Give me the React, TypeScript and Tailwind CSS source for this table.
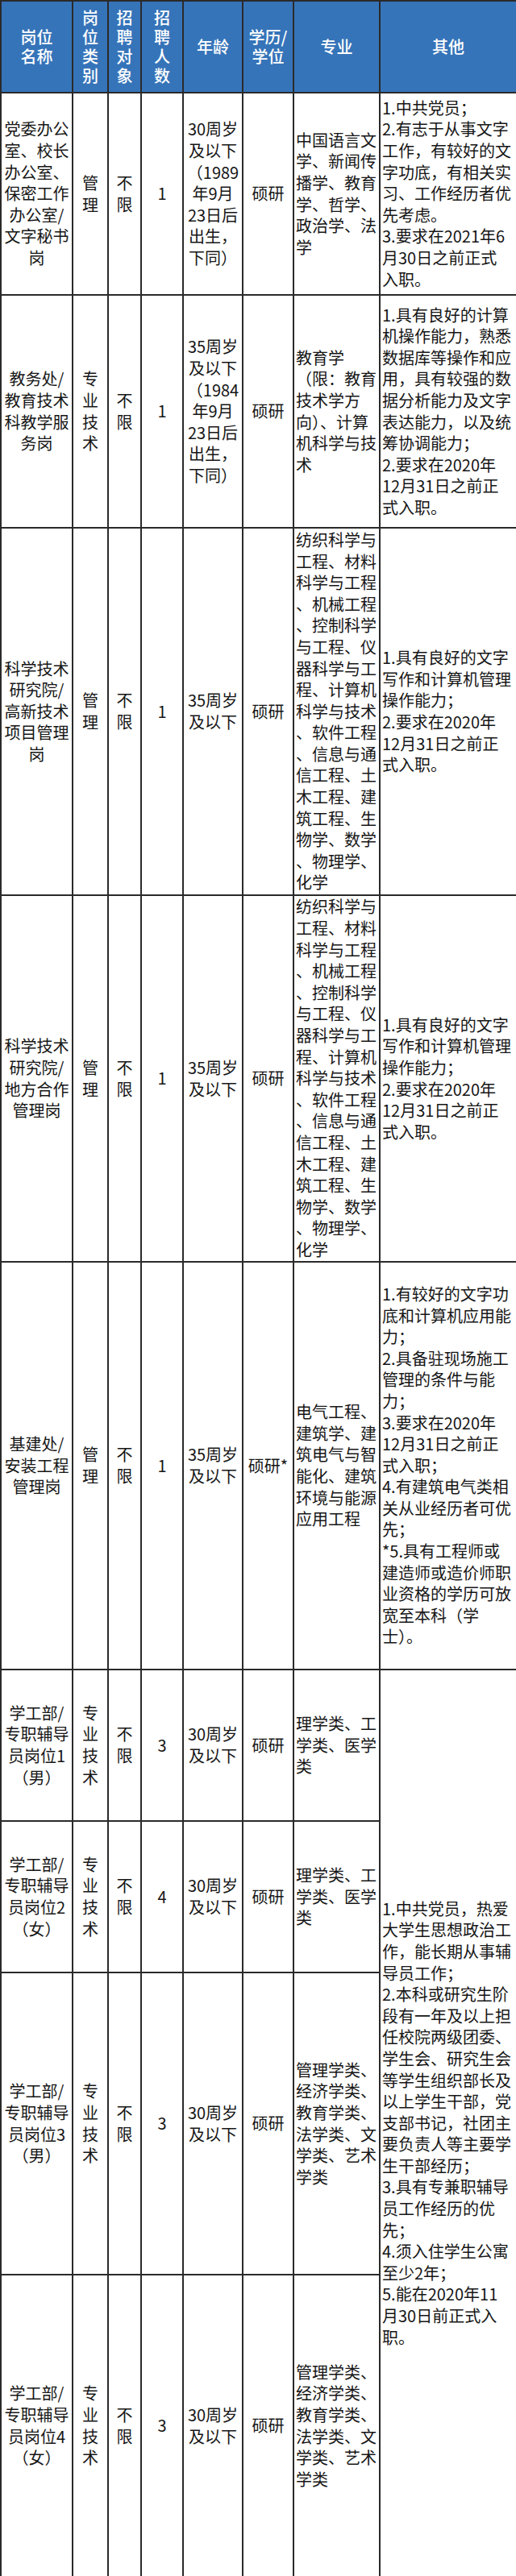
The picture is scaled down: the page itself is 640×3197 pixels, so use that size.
/**
 * Recruitment positions table (岗位表). Static data rendered as a fixed-layout
 * table; each cell's lines are listed explicitly so the wrapping matches the
 * original sheet (which breaks lines without kinsoku rules).
 */

interface PositionRow {
  name: string[];
  type: string[];
  target: string[];
  count: string;
  age: string[];
  degree: string;
  major: string[];
  other?: string[];
  otherSpan?: number;
  height: string;
}

const COL_WIDTHS = ['w-[89px]', 'w-[44px]', 'w-[41px]', 'w-[52px]', 'w-[74px]', 'w-[63px]', 'w-[107px]', 'w-[170px]'];

const SCIENCE_MAJORS = [
  '纺织科学与',
  '工程、材料',
  '科学与工程',
  '、机械工程',
  '、控制科学',
  '与工程、仪',
  '器科学与工',
  '程、计算机',
  '科学与技术',
  '、软件工程',
  '、信息与通',
  '信工程、土',
  '木工程、建',
  '筑工程、生',
  '物学、数学',
  '、物理学、',
  '化学',
];

const SCIENCE_OTHER = [
  '1.具有良好的文字',
  '写作和计算机管理',
  '操作能力；',
  '2.要求在2020年',
  '12月31日之前正',
  '式入职。',
];

const HUMANITIES_MAJORS = ['管理学类、', '经济学类、', '教育学类、', '法学类、文', '学类、艺术', '学类'];

const COUNSELOR_OTHER = [
  '1.中共党员，热爱',
  '大学生思想政治工',
  '作，能长期从事辅',
  '导员工作；',
  '2.本科或研究生阶',
  '段有一年及以上担',
  '任校院两级团委、',
  '学生会、研究生会',
  '等学生组织部长及',
  '以上学生干部，党',
  '支部书记，社团主',
  '要负责人等主要学',
  '生干部经历；',
  '3.具有专兼职辅导',
  '员工作经历的优',
  '先；',
  '4.须入住学生公寓',
  '至少2年；',
  '5.能在2020年11',
  '月30日前正式入',
  '职。',
];

const MGMT = ['管', '理'];
const TECH = ['专', '业', '技', '术'];
const ANY = ['不', '限'];

const ROWS: PositionRow[] = [
  {
    name: ['党委办公', '室、校长', '办公室、', '保密工作', '办公室/', '文字秘书', '岗'],
    type: MGMT,
    target: ANY,
    count: '1',
    age: ['30周岁', '及以下', '（1989', '年9月', '23日后', '出生，', '下同）'],
    degree: '硕研',
    major: ['中国语言文', '学、新闻传', '播学、教育', '学、哲学、', '政治学、法', '学'],
    other: [
      '1.中共党员；',
      '2.有志于从事文字',
      '工作，有较好的文',
      '字功底，有相关实',
      '习、工作经历者优',
      '先考虑。',
      '3.要求在2021年6',
      '月30日之前正式',
      '入职。',
    ],
    height: 'h-[251px]',
  },
  {
    name: ['教务处/', '教育技术', '科教学服', '务岗'],
    type: TECH,
    target: ANY,
    count: '1',
    age: ['35周岁', '及以下', '（1984', '年9月', '23日后', '出生，', '下同）'],
    degree: '硕研',
    major: ['教育学', '（限：教育', '技术学方', '向）、计算', '机科学与技', '术'],
    other: [
      '1.具有良好的计算',
      '机操作能力，熟悉',
      '数据库等操作和应',
      '用，具有较强的数',
      '据分析能力及文字',
      '表达能力，以及统',
      '筹协调能力；',
      '2.要求在2020年',
      '12月31日之前正',
      '式入职。',
    ],
    height: 'h-[289px]',
  },
  {
    name: ['科学技术', '研究院/', '高新技术', '项目管理', '岗'],
    type: MGMT,
    target: ANY,
    count: '1',
    age: ['35周岁', '及以下'],
    degree: '硕研',
    major: SCIENCE_MAJORS,
    other: SCIENCE_OTHER,
    height: 'h-[456px]',
  },
  {
    name: ['科学技术', '研究院/', '地方合作', '管理岗'],
    type: MGMT,
    target: ANY,
    count: '1',
    age: ['35周岁', '及以下'],
    degree: '硕研',
    major: SCIENCE_MAJORS,
    other: SCIENCE_OTHER,
    height: 'h-[455px]',
  },
  {
    name: ['基建处/', '安装工程', '管理岗'],
    type: MGMT,
    target: ANY,
    count: '1',
    age: ['35周岁', '及以下'],
    degree: '硕研*',
    major: ['电气工程、', '建筑学、建', '筑电气与智', '能化、建筑', '环境与能源', '应用工程'],
    other: [
      '1.有较好的文字功',
      '底和计算机应用能',
      '力；',
      '2.具备驻现场施工',
      '管理的条件与能',
      '力；',
      '3.要求在2020年',
      '12月31日之前正',
      '式入职；',
      '4.有建筑电气类相',
      '关从业经历者可优',
      '先；',
      '*5.具有工程师或',
      '建造师或造价师职',
      '业资格的学历可放',
      '宽至本科（学',
      '士）。',
    ],
    height: 'h-[506px]',
  },
  {
    name: ['学工部/', '专职辅导', '员岗位1', '（男）'],
    type: TECH,
    target: ANY,
    count: '3',
    age: ['30周岁', '及以下'],
    degree: '硕研',
    major: ['理学类、工', '学类、医学', '类'],
    other: COUNSELOR_OTHER,
    otherSpan: 4,
    height: 'h-[188px]',
  },
  {
    name: ['学工部/', '专职辅导', '员岗位2', '（女）'],
    type: TECH,
    target: ANY,
    count: '4',
    age: ['30周岁', '及以下'],
    degree: '硕研',
    major: ['理学类、工', '学类、医学', '类'],
    height: 'h-[188px]',
  },
  {
    name: ['学工部/', '专职辅导', '员岗位3', '（男）'],
    type: TECH,
    target: ANY,
    count: '3',
    age: ['30周岁', '及以下'],
    degree: '硕研',
    major: HUMANITIES_MAJORS,
    height: 'h-[375px]',
  },
  {
    name: ['学工部/', '专职辅导', '员岗位4', '（女）'],
    type: TECH,
    target: ANY,
    count: '3',
    age: ['30周岁', '及以下'],
    degree: '硕研',
    major: HUMANITIES_MAJORS,
    height: 'h-[375px]',
  },
];

const HEADERS: string[][] = [
  ['岗位', '名称'],
  ['岗', '位', '类', '别'],
  ['招', '聘', '对', '象'],
  ['招', '聘', '人', '数'],
  ['年龄'],
  ['学历/', '学位'],
  ['专业'],
  ['其他'],
];

const CELL = 'border-2 border-[#2a2a2a] p-0 align-middle';

function Lines({ lines }: { lines: string[] }) {
  return (
    <>
      {lines.map((line, i) => (
        <div key={i} className="whitespace-nowrap">
          {line}
        </div>
      ))}
    </>
  );
}

export default function App() {
  return (
    <div className="w-[640px] bg-white text-[#161616] [font-family:'Noto_Sans_CJK_SC','Noto_Sans',sans-serif]">
      <table className="w-[640px] table-fixed border-collapse">
        <colgroup>
          {COL_WIDTHS.map((w) => (
            <col key={w} className={w} />
          ))}
        </colgroup>
        <thead>
          <tr className="h-[114px]">
            {HEADERS.map((lines, i) => (
              <th
                key={i}
                className={`${CELL} bg-[#3674b9] text-center text-[20px] font-medium leading-[24px] text-white`}
              >
                <Lines lines={lines} />
              </th>
            ))}
          </tr>
        </thead>
        <tbody className="text-[20px] leading-[26.6px]">
          {ROWS.map((row, i) => (
            <tr key={i} className={row.height}>
              <td className={`${CELL} text-center`}>
                <Lines lines={row.name} />
              </td>
              <td className={`${CELL} text-center`}>
                <Lines lines={row.type} />
              </td>
              <td className={`${CELL} text-center`}>
                <Lines lines={row.target} />
              </td>
              <td className={`${CELL} text-center`}>{row.count}</td>
              <td className={`${CELL} text-center`}>
                <Lines lines={row.age} />
              </td>
              <td className={`${CELL} text-center`}>{row.degree}</td>
              <td className={`${CELL} pl-[2px] text-left`}>
                <Lines lines={row.major} />
              </td>
              {row.other && (
                <td className={`${CELL} pl-[2px] text-left`} rowSpan={row.otherSpan ?? 1}>
                  <Lines lines={row.other} />
                </td>
              )}
            </tr>
          ))}
        </tbody>
      </table>
    </div>
  );
}
